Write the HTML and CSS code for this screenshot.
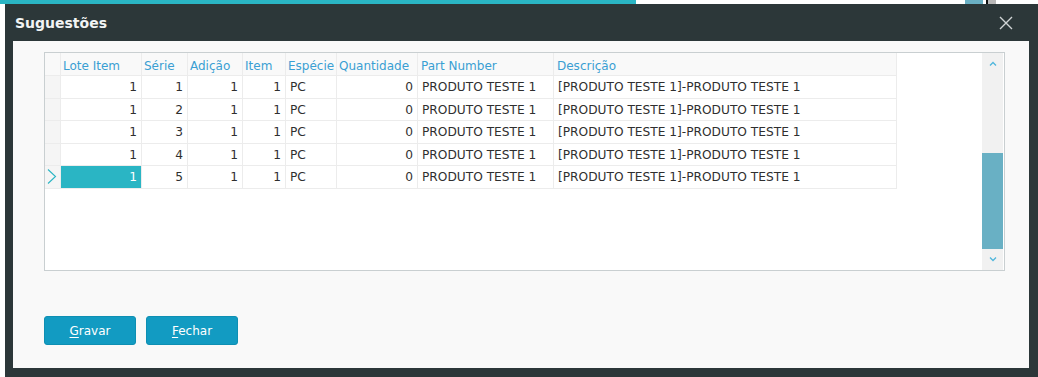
FILE: index.html
```html
<!DOCTYPE html>
<html>
<head>
<meta charset="utf-8">
<link rel="stylesheet" href="styles.css">
</head>
<body>
<div class="strip">
  <div class="strip-teal"></div>
  <div class="strip-white"><span class="mark-blue"></span><span class="mark-black"></span><span class="mark-gray"></span></div>
</div>
<div class="page">
  <div class="left-gap"></div>
  <div class="dialog">
    <div class="titlebar">
      <span class="title">Suguestões</span>
      <svg class="close" width="14" height="14" viewBox="0 0 14 14"><path d="M1 1L13 13M13 1L1 13" stroke="#d0d4d5" stroke-width="1.4" fill="none"/></svg>
    </div>
    <div class="content">
      <div class="gridbox">
        <div class="table">
          <div class="row head">
            <div class="c ind"></div>
            <div class="c w1">Lote Item</div>
            <div class="c w2">Série</div>
            <div class="c w3">Adição</div>
            <div class="c w4">Item</div>
            <div class="c w5">Espécie</div>
            <div class="c w6">Quantidade</div>
            <div class="c w7">Part Number</div>
            <div class="c w8">Descrição</div>
          </div>
          <div class="row">
            <div class="c ind"></div>
            <div class="c w1 num">1</div><div class="c w2 num">1</div><div class="c w3 num">1</div><div class="c w4 num">1</div>
            <div class="c w5">PC</div><div class="c w6 num">0</div><div class="c w7">PRODUTO TESTE 1</div><div class="c w8">[PRODUTO TESTE 1]-PRODUTO TESTE 1</div>
          </div>
          <div class="row">
            <div class="c ind"></div>
            <div class="c w1 num">1</div><div class="c w2 num">2</div><div class="c w3 num">1</div><div class="c w4 num">1</div>
            <div class="c w5">PC</div><div class="c w6 num">0</div><div class="c w7">PRODUTO TESTE 1</div><div class="c w8">[PRODUTO TESTE 1]-PRODUTO TESTE 1</div>
          </div>
          <div class="row">
            <div class="c ind"></div>
            <div class="c w1 num">1</div><div class="c w2 num">3</div><div class="c w3 num">1</div><div class="c w4 num">1</div>
            <div class="c w5">PC</div><div class="c w6 num">0</div><div class="c w7">PRODUTO TESTE 1</div><div class="c w8">[PRODUTO TESTE 1]-PRODUTO TESTE 1</div>
          </div>
          <div class="row">
            <div class="c ind"></div>
            <div class="c w1 num">1</div><div class="c w2 num">4</div><div class="c w3 num">1</div><div class="c w4 num">1</div>
            <div class="c w5">PC</div><div class="c w6 num">0</div><div class="c w7">PRODUTO TESTE 1</div><div class="c w8">[PRODUTO TESTE 1]-PRODUTO TESTE 1</div>
          </div>
          <div class="row">
            <div class="c ind"><svg width="11" height="17" viewBox="0 0 11 17"><path d="M2 1.5L9.5 8.5L2 15.5" stroke="#2ab5c4" stroke-width="1.1" fill="none"/></svg></div>
            <div class="c w1 num sel">1</div><div class="c w2 num">5</div><div class="c w3 num">1</div><div class="c w4 num">1</div>
            <div class="c w5">PC</div><div class="c w6 num">0</div><div class="c w7">PRODUTO TESTE 1</div><div class="c w8">[PRODUTO TESTE 1]-PRODUTO TESTE 1</div>
          </div>
        </div>
        <div class="scrollbar">
          <div class="arrow"><svg width="8" height="5" viewBox="0 0 8 5"><path d="M1 4.5L4 1.5L7 4.5" stroke="#4fb6dc" stroke-width="1.3" fill="none"/></svg></div>
          <div class="track"><div class="thumb"></div></div>
          <div class="arrow"><svg width="8" height="5" viewBox="0 0 8 5"><path d="M1 0.5L4 3.5L7 0.5" stroke="#4fb6dc" stroke-width="1.3" fill="none"/></svg></div>
        </div>
      </div>
      <div class="buttons">
        <button class="btn"><u>G</u>ravar</button>
        <button class="btn"><u>F</u>echar</button>
      </div>
    </div>
  </div>
</div>
</body>
</html>
```
FILE: styles.css
```css
html, body {
  margin: 0;
  padding: 0;
  background: #ffffff;
  font-family: "DejaVu Sans", Verdana, sans-serif;
  font-size: 12px;
  overflow: hidden;
}
.strip {
  display: flex;
  height: 4px;
}
.strip-teal {
  width: 636px;
  background: #2ab5c4;
}
.strip-white {
  flex: 1;
  background: #ffffff;
  display: flex;
  padding-left: 329px;
}
.mark-blue { width: 18px; background: #6ab0c4; }
.mark-black { width: 2px; margin-left: 3px; background: #111; }
.mark-gray { width: 8px; background: #b8b8b8; }
.page {
  display: flex;
  height: 373px;
}
.left-gap {
  width: 5px;
  flex: none;
}
.dialog {
  flex: 1;
  background: #2c3739;
  display: flex;
  flex-direction: column;
  padding: 0 9px 9px 8px;
}
.titlebar {
  height: 37px;
  display: flex;
  align-items: center;
  justify-content: space-between;
  padding-left: 2px;
  padding-right: 16px;
}
.title {
  color: #f2f4f4;
  font-weight: bold;
  font-size: 14px;
}
.close {
  display: block;
  margin-top: 1px;
}
.content {
  flex: 1;
  background: #f9f9f9;
  padding: 11px 24px 0 31px;
  display: flex;
  flex-direction: column;
}
.gridbox {
  height: 217px;
  border: 1px solid #c9cfd1;
  background: #ffffff;
  display: flex;
  padding-right: 1px;
}
.table {
  flex: 1;
}
.row {
  display: flex;
  height: 22.5px;
}
.row.head {
  height: 23px;
}
.c {
  box-sizing: border-box;
  border-right: 1px solid #ececec;
  border-bottom: 1px solid #ececec;
  padding: 1px 4px 0 4px;
  display: flex;
  align-items: center;
  color: #2f2f2f;
  font-size: 12.2px;
  white-space: nowrap;
  overflow: hidden;
}
.head .c {
  color: #3a9fd3;
  background: #f9f9f9;
  padding: 3px 2px 0 2px;
  font-size: 12px;
}
.head .w7, .head .w8 { padding-left: 3px; }
.ind {
  width: 16px;
  background: #f5f5f5;
  padding: 0 0 0 1px;
}
.row .c.ind { padding: 0 0 0 1px; }
.ind svg { display: block; }
.w1 { width: 81px; }
.w2 { width: 46px; }
.w3 { width: 55px; }
.w4 { width: 43px; }
.w5 { width: 51px; }
.w6 { width: 81px; }
.w7 { width: 136px; }
.w8 { width: 343px; }
.num {
  justify-content: flex-end;
}
.sel {
  background: #2ab5c4;
  color: #ffffff;
}
.scrollbar {
  width: 21px;
  background: #f1f1f1;
  display: flex;
  flex-direction: column;
}
.arrow {
  height: 21px;
  display: flex;
  align-items: center;
  justify-content: center;
}
.arrow svg { display: block; }
.track {
  flex: 1;
  display: flex;
  flex-direction: column;
  justify-content: flex-end;
}
.thumb {
  height: 96px;
  background: #69b0c4;
}
.buttons {
  display: flex;
  gap: 10px;
  margin-top: 45px;
}
.btn {
  width: 92px;
  height: 29px;
  border: 1px solid #0e8fb3;
  border-radius: 3px;
  background: #129bc2;
  color: #ffffff;
  font-family: "DejaVu Sans", Verdana, sans-serif;
  font-size: 12px;
  padding: 0;
}
.btn u {
  text-decoration-thickness: 1px;
  text-underline-offset: 2px;
}
```
